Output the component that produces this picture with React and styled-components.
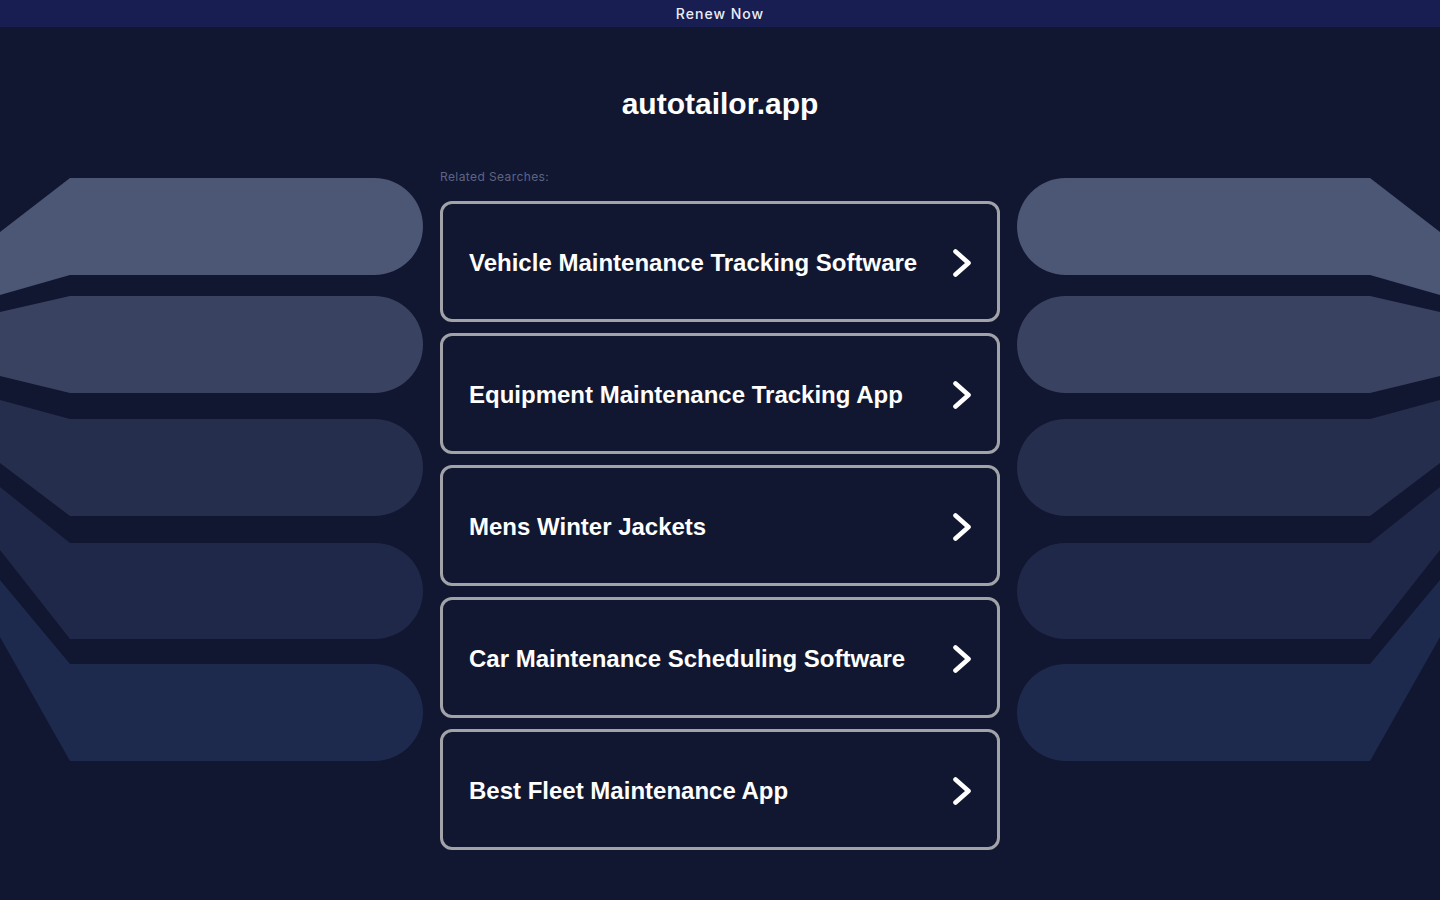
import React from "react";
import styled, { createGlobalStyle } from "styled-components";

const colors = {
  page: "#111730",
  bar: "#181d52",
  border: "#a2a3a9",
  label: "#5d6486",
  bands: ["#4c5675", "#3a4261", "#262e4d", "#1f2849", "#1e2a4d"]
};

const searches = [
  "Vehicle Maintenance Tracking Software",
  "Equipment Maintenance Tracking App",
  "Mens Winter Jackets",
  "Car Maintenance Scheduling Software",
  "Best Fleet Maintenance App"
];

// left edge taper points for each band: [topLeftY, topY, bottomY, bottomLeftY]
const bands = [
  [54, 0, 97, 117],
  [134, 118, 215, 198],
  [222, 241, 338, 285],
  [309, 365, 461, 372],
  [402, 486, 583, 459]
];

const GlobalStyle = createGlobalStyle`
  html, body {
    margin: 0;
    padding: 0;
    background: ${colors.page};
  }
  * {
    box-sizing: border-box;
  }
`;

const PageSC = styled.div`
  min-height: 900px;
  background: ${colors.page};
  font-family: "Liberation Sans", Arial, sans-serif;
`;

const TopBarSC = styled.div`
  height: 27px;
  background: ${colors.bar};
  display: flex;
  align-items: center;
  justify-content: center;
`;

const RenewSC = styled.a`
  font-family: Inter, "Open Sans", sans-serif;
  font-size: 14px;
  font-weight: 500;
  letter-spacing: 1px;
  color: #eceef6;
  text-decoration: none;
`;

const TitleSC = styled.h1`
  margin: 59px 0 0;
  font-size: 30px;
  line-height: 36px;
  font-weight: bold;
  color: #ffffff;
  text-align: center;
`;

const LayoutSC = styled.div`
  display: grid;
  grid-template-columns: 440px 560px 440px;
  align-items: start;
  margin-top: 48px;
`;

const SideSC = styled.svg`
  display: block;
  margin-top: 8px;
  width: 423px;
  height: 584px;
  justify-self: ${p => (p.$flip ? "end" : "start")};
  transform: ${p => (p.$flip ? "scaleX(-1)" : "none")};
`;

const ColumnSC = styled.div`
  display: flex;
  flex-direction: column;
`;

const LabelSC = styled.div`
  font-family: Inter, "Open Sans", sans-serif;
  font-size: 12px;
  line-height: 14px;
  letter-spacing: 0.4px;
  color: ${colors.label};
  margin-bottom: 17px;
`;

const ListSC = styled.div`
  display: flex;
  flex-direction: column;
  gap: 11px;
`;

const CardSC = styled.a`
  display: flex;
  align-items: center;
  justify-content: space-between;
  height: 121px;
  padding: 2px 26px 0 26px;
  border: 3px solid ${colors.border};
  border-radius: 12px;
  color: #ffffff;
  text-decoration: none;
  cursor: pointer;
`;

const CardTextSC = styled.span`
  font-size: 24px;
  font-weight: bold;
  line-height: 28px;
`;

const ChevronSC = styled.svg`
  width: 22px;
  height: 30px;
  flex-shrink: 0;
`;

const Side = ({ flip }) => (
  <SideSC $flip={flip} viewBox="0 0 423 584">
    {bands.map(([tl, t, b, bl], i) => {
      const r = (b - t) / 2;
      const x = 423 - r;
      return (
        <path
          key={i}
          fill={colors.bands[i]}
          d={`M0,${tl} L70,${t} H${x} A${r},${r} 0 0 1 ${x},${b} H70 L0,${bl} Z`}
        />
      );
    })}
  </SideSC>
);

const Chevron = () => (
  <ChevronSC viewBox="0 0 22 30">
    <polyline
      points="6.5,3.5 19.5,15 6.5,26.5"
      fill="none"
      stroke="#ffffff"
      strokeWidth="4.6"
      strokeLinecap="round"
      strokeLinejoin="round"
    />
  </ChevronSC>
);

export default function App() {
  return (
    <PageSC>
      <GlobalStyle />
      <TopBarSC>
        <RenewSC>Renew Now</RenewSC>
      </TopBarSC>
      <TitleSC>autotailor.app</TitleSC>
      <LayoutSC>
        <Side />
        <ColumnSC>
          <LabelSC>Related Searches:</LabelSC>
          <ListSC>
            {searches.map(s => (
              <CardSC key={s}>
                <CardTextSC>{s}</CardTextSC>
                <Chevron />
              </CardSC>
            ))}
          </ListSC>
        </ColumnSC>
        <Side flip />
      </LayoutSC>
    </PageSC>
  );
}
